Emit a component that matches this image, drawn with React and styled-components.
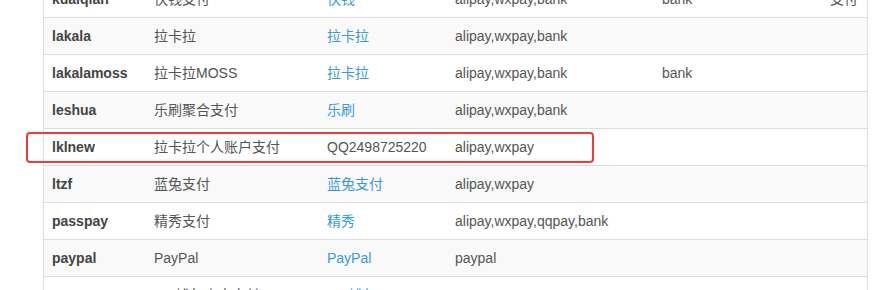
import React from "react";
import styled, { createGlobalStyle } from "styled-components";

const GlobalStyle = createGlobalStyle`
  html, body {
    margin: 0;
    padding: 0;
    background: #fff;
    overflow: hidden;
  }
  body {
    font-family: "Liberation Sans", Arial, "Noto Sans CJK SC", sans-serif;
    font-size: 14px;
    color: #555;
  }
`;

const rows = [
  ["kuaiqian", "快钱支付", "快钱", "alipay,wxpay,bank", "bank", "支付"],
  ["lakala", "拉卡拉", "拉卡拉", "alipay,wxpay,bank", "", ""],
  ["lakalamoss", "拉卡拉MOSS", "拉卡拉", "alipay,wxpay,bank", "bank", ""],
  ["leshua", "乐刷聚合支付", "乐刷", "alipay,wxpay,bank", "", ""],
  ["lklnew", "拉卡拉个人账户支付", "QQ2498725220", "alipay,wxpay", "", "", true],
  ["ltzf", "蓝兔支付", "蓝兔支付", "alipay,wxpay", "", ""],
  ["passpay", "精秀支付", "精秀", "alipay,wxpay,qqpay,bank", "", ""],
  ["paypal", "PayPal", "PayPal", "paypal", "", ""],
  ["qqpay", "QQ钱包官方支付", "QQ钱包", "qqpay", "", ""],
];

const widths = [102, 173, 128, 207, 168, 45];

const Page = styled.div`
  position: relative;
  height: 290px;
  padding-left: 43px;
`;

// the list is scrolled: its first row is cut by the top edge
const Panel = styled.div`
  display: flow-root;
  overflow: hidden;
  width: 823px;
  height: 100%;
  border-left: 1px solid #ddd;
  border-right: 1px solid #ddd;
`;

const Table = styled.table`
  width: 100%;
  margin-top: -20px;
  border-collapse: collapse;
  border-spacing: 0;
  table-layout: fixed;
`;

const Row = styled.tr`
  background: ${(p) => (p.$striped ? "#f9f9f9" : "#fff")};
`;

const Cell = styled.td`
  padding: 8px;
  line-height: 20px;
  border-top: 1px solid #ddd;
  vertical-align: top;
  white-space: nowrap;
  overflow: hidden;
  font-weight: ${(p) => (p.$bold ? "bold" : "normal")};
  color: ${(p) => (p.$bold ? "#444" : "#555")};
`;

const Link = styled.a`
  color: #3a9ad9;
  text-decoration: none;
`;

const Highlight = styled.div`
  position: absolute;
  left: 26px;
  top: 132px;
  width: 568px;
  height: 31px;
  box-sizing: border-box;
  border: 2px solid #ef3b3b;
  border-radius: 4px;
  pointer-events: none;
`;

export default function App() {
  return (
    <>
      <GlobalStyle />
      <Page>
        <Panel>
          <Table>
            <colgroup>
              {widths.map((w, i) => (
                <col key={i} style={{ width: w }} />
              ))}
            </colgroup>
            <tbody>
              {rows.map(([key, name, site, types, transfer, note, plain], i) => (
                <Row key={key} $striped={i % 2 === 1}>
                  <Cell $bold>{key}</Cell>
                  <Cell>{name}</Cell>
                  <Cell>{plain ? site : <Link href="#">{site}</Link>}</Cell>
                  <Cell>{types}</Cell>
                  <Cell>{transfer}</Cell>
                  <Cell>{note}</Cell>
                </Row>
              ))}
            </tbody>
          </Table>
        </Panel>
        <Highlight />
      </Page>
    </>
  );
}
